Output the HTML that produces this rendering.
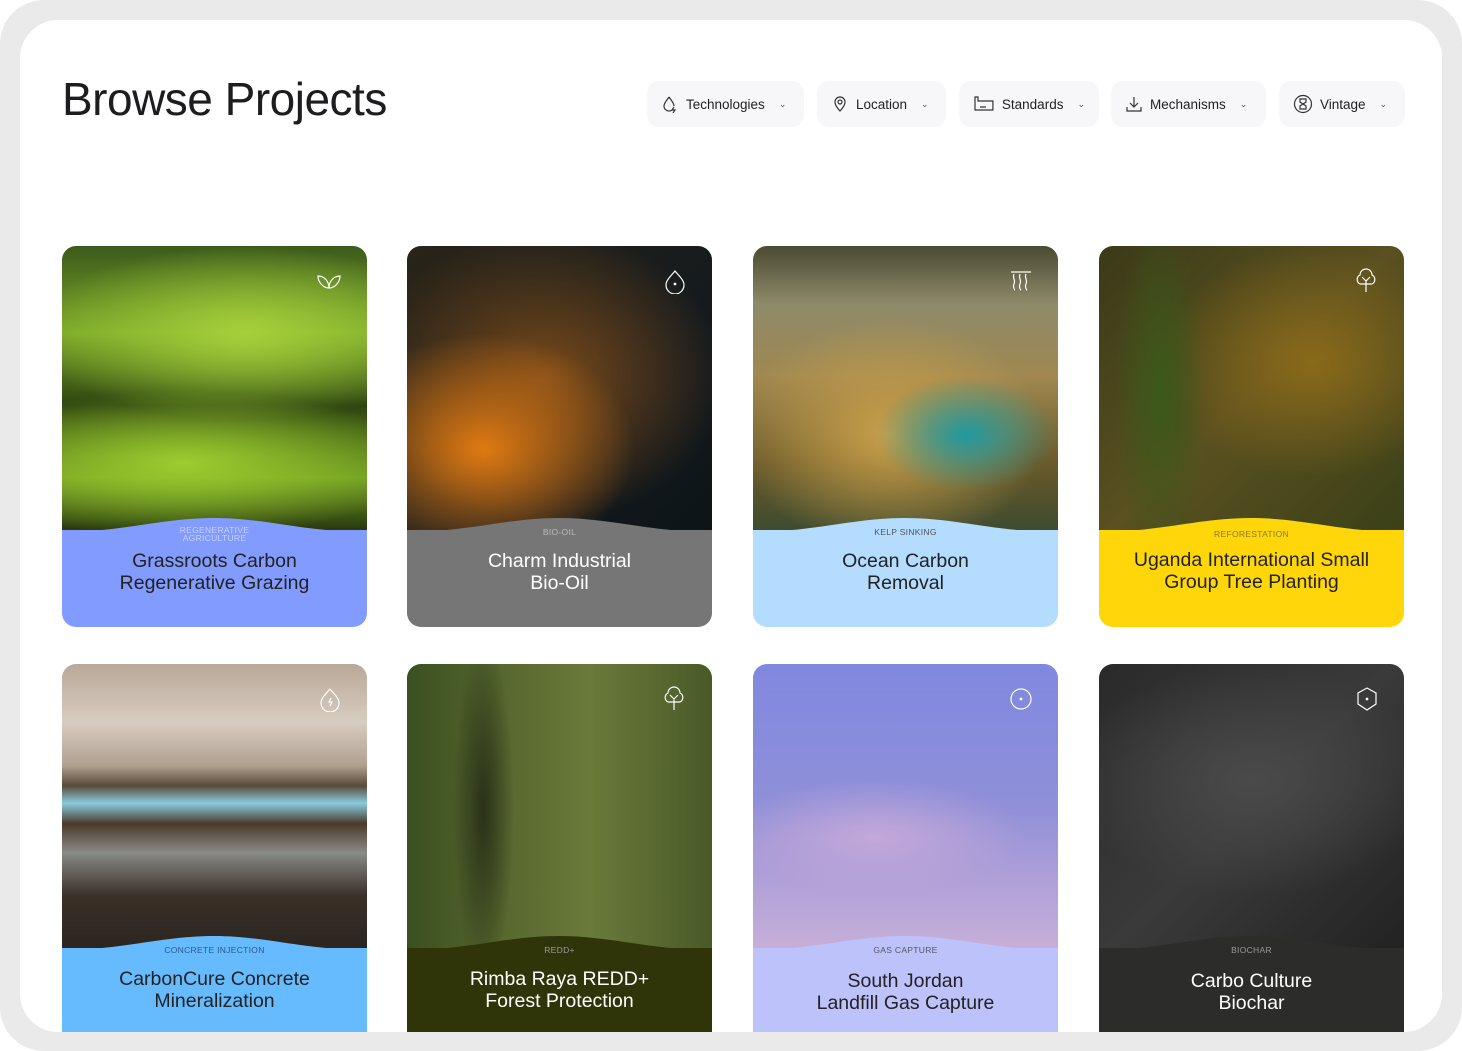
<!DOCTYPE html>
<html><head><meta charset="utf-8"><style>
*{box-sizing:border-box;margin:0;padding:0}
html,body{width:1462px;height:1051px;overflow:hidden;background:#fff;font-family:"Liberation Sans",sans-serif}
.frame{position:absolute;left:0;top:0;width:1462px;height:1051px;background:#ebeaeb;border-radius:44px}
.panel{position:absolute;left:20px;top:20px;width:1422px;height:1012px;background:#fff;border-radius:38px;overflow:hidden}
h1{position:absolute;left:42px;top:52px;font-weight:400;font-size:46px;color:#1d1d1f;letter-spacing:-0.5px}
.btn{position:absolute;top:61px;height:46px;background:#f7f6f8;border-radius:12px;display:flex;align-items:center;padding:0 14px;font-size:13.5px;color:#222}
.btn svg{margin-right:7px}
.btn .ch{margin-left:14px;font-size:9px;color:#555}
.card{position:absolute;width:305px;border-radius:14px;overflow:hidden}
.img{position:absolute;left:0;top:0;right:0;height:290px}
.bot{position:absolute;left:0;right:0;top:268px;bottom:0}
.bot svg{position:absolute;top:0;left:0}
.bot .fill{position:absolute;top:16px;left:0;right:0;bottom:0}
.tag{position:absolute;top:12px;left:0;right:0;text-align:center;font-size:8.5px;line-height:8px;letter-spacing:.3px;z-index:2}
.ttl{position:absolute;top:36px;left:0;right:0;text-align:center;font-size:19.5px;line-height:22px;color:#222;z-index:2}
.ic{position:absolute;top:22px;right:24px;z-index:3}
</style></head><body>
<div class="frame"></div>
<div class="panel">
<h1>Browse Projects</h1>
<div class="btn" style="left:627px;width:157px"><svg width="18" height="18" viewBox="0 0 18 18" fill="none" stroke="#333" stroke-width="1.2"><path d="M8 2C6 5 3 8 3 11a5 5 0 0 0 8 4M8 2c2 3 5 6 5 9"/><path d="M13 12l-2 3h3l-2 3"/></svg>Technologies<span class="ch">⌄</span></div>
<div class="btn" style="left:797px;width:129px"><svg width="18" height="18" viewBox="0 0 18 18" fill="none" stroke="#333" stroke-width="1.2"><path d="M9 16s5-5 5-9a5 5 0 0 0-10 0c0 4 5 9 5 9z"/><circle cx="9" cy="7" r="2"/></svg>Location<span class="ch">⌄</span></div>
<div class="btn" style="left:939px;width:140px"><svg width="22" height="18" viewBox="0 0 22 18" fill="none" stroke="#333" stroke-width="1.2"><path d="M2 2v13h18V6H5V2z"/><path d="M7 12h6"/></svg>Standards<span class="ch">⌄</span></div>
<div class="btn" style="left:1091px;width:155px"><svg width="18" height="18" viewBox="0 0 18 18" fill="none" stroke="#333" stroke-width="1.2"><path d="M9 2v10M5 8l4 4 4-4M2 12v4h14v-4"/></svg>Mechanisms<span class="ch">⌄</span></div>
<div class="btn" style="left:1259px;width:126px"><svg width="20" height="20" viewBox="0 0 20 20" fill="none" stroke="#333" stroke-width="1.2"><circle cx="10" cy="10" r="8.5"/><path d="M7 5h6v3l-3 2 3 2v3H7v-3l3-2-3-2z"/></svg>Vintage<span class="ch">⌄</span></div>

<div class="card" style="left:42px;top:226px;height:381px">
<div class="img" style="background:radial-gradient(ellipse 70% 30% at 60% 30%,#a6d03a,transparent),radial-gradient(ellipse 80% 25% at 40% 75%,#9ccc2e,transparent),linear-gradient(#3c5a1a,#7aa82a 30%,#2d4410 55%,#6e9a22 80%,#202e0c)"></div>
<svg class="ic" width="28" height="24" viewBox="0 0 28 24" fill="none" stroke="#fff" stroke-width="1.2"><path d="M14 20C8 20 3 14 3 8c6 0 11 5 11 12zM14 20c6 0 11-6 11-12-6 0-11 5-11 12z"/></svg>
<div class="bot"><svg width="305" height="20" viewBox="0 0 305 20" preserveAspectRatio="none"><path d="M0 18C60 18 100 4 152 4s90 14 153 14V20H0z" fill="#829bff"/></svg><div class="fill" style="background:#829bff"></div>
<div class="tag" style="color:#c7d2ff">REGENERATIVE<br>AGRICULTURE</div><div class="ttl">Grassroots Carbon<br>Regenerative Grazing</div></div></div>

<div class="card" style="left:387px;top:226px;height:381px">
<div class="img" style="background:radial-gradient(ellipse 50% 40% at 25% 70%,#e07a12,transparent),radial-gradient(ellipse 60% 50% at 45% 45%,#7a4a1a,transparent),linear-gradient(135deg,#2a2418,#141a1e 60%,#0d1418)"></div>
<svg class="ic" width="26" height="26" viewBox="0 0 26 26" fill="none" stroke="#fff" stroke-width="1.2"><path d="M13 3c-4 5-9 9-9 14a9 9 0 0 0 18 0c0-5-5-9-9-14z"/><circle cx="13" cy="16" r="0.8" fill="#fff"/></svg>
<div class="bot"><svg width="305" height="20" viewBox="0 0 305 20" preserveAspectRatio="none"><path d="M0 18C60 18 100 4 152 4s90 14 153 14V20H0z" fill="#767676"/></svg><div class="fill" style="background:#767676"></div>
<div class="tag" style="color:#bbb;top:14px">BIO-OIL</div><div class="ttl" style="color:#fff">Charm Industrial<br>Bio-Oil</div></div></div>

<div class="card" style="left:733px;top:226px;height:381px">
<div class="img" style="background:radial-gradient(ellipse 30% 20% at 70% 65%,#1f9aa0,transparent),radial-gradient(ellipse 50% 40% at 45% 65%,#c9a04a,transparent),linear-gradient(#4a4a30,#8e8a6a 20%,#a08850 45%,#6a5a2a 75%,#3a4a30)"></div>
<svg class="ic" width="26" height="26" viewBox="0 0 26 26" fill="none" stroke="#fff" stroke-width="1.2"><path d="M3 4h20M6 6c-2 4 2 6 0 10s2 6 0 6M12 6c-2 4 2 6 0 10s2 6 0 6M18 6c-2 4 2 6 0 10s2 6 0 6"/></svg>
<div class="bot"><svg width="305" height="20" viewBox="0 0 305 20" preserveAspectRatio="none"><path d="M0 18C60 18 100 4 152 4s90 14 153 14V20H0z" fill="#b3dcfe"/></svg><div class="fill" style="background:#b3dcfe"></div>
<div class="tag" style="color:#555;top:14px">KELP SINKING</div><div class="ttl">Ocean Carbon<br>Removal</div></div></div>

<div class="card" style="left:1079px;top:226px;height:381px">
<div class="img" style="background:radial-gradient(ellipse 15% 60% at 20% 50%,#3a5a1a,transparent),radial-gradient(ellipse 50% 40% at 70% 40%,#8a6a1a,transparent),linear-gradient(135deg,#3a3a18,#5a5020 50%,#3a4018)"></div>
<svg class="ic" width="28" height="26" viewBox="0 0 28 26" fill="none" stroke="#fff" stroke-width="1.2"><path d="M14 24V12M10 9l4 4 4-4M8 16a5 5 0 0 1 0-9 6 6 0 0 1 12 0 5 5 0 0 1 0 9z"/></svg>
<div class="bot"><svg width="305" height="20" viewBox="0 0 305 20" preserveAspectRatio="none"><path d="M0 18C60 18 100 4 152 4s90 14 153 14V20H0z" fill="#ffd60a"/></svg><div class="fill" style="background:#ffd60a"></div>
<div class="tag" style="color:#8a7a20;top:16px">REFORESTATION</div><div class="ttl" style="top:35px">Uganda International Small<br>Group Tree Planting</div></div></div>

<div class="card" style="left:42px;top:644px;height:400px;border-radius:14px 14px 0 0">
<div class="img" style="background:linear-gradient(#b8a898,#d8ccc0 20%,#b0a090 35%,#5a4a3a 42%,#8acbe0 48%,#4a3a2a 55%,#8a8a86 65%,#3a3028 80%,#2a2420)"></div>
<svg class="ic" width="26" height="26" viewBox="0 0 26 26" fill="none" stroke="#fff" stroke-width="1.2"><path d="M13 3c-4 5-9 9-9 14a9 9 0 0 0 18 0c0-5-5-9-9-14z"/><path d="M14 12l-2 4h3l-2 4"/></svg>
<div class="bot"><svg width="305" height="20" viewBox="0 0 305 20" preserveAspectRatio="none"><path d="M0 18C60 18 100 4 152 4s90 14 153 14V20H0z" fill="#66bbff"/></svg><div class="fill" style="background:#66bbff"></div>
<div class="tag" style="color:#2a5a8a;top:14px">CONCRETE INJECTION</div><div class="ttl">CarbonCure Concrete<br>Mineralization</div></div></div>

<div class="card" style="left:387px;top:644px;height:400px;border-radius:14px 14px 0 0">
<div class="img" style="background:radial-gradient(ellipse 10% 60% at 25% 50%,#2a3018,transparent),linear-gradient(90deg,#3a5020,#5a6a30 35%,#6a7a3a 60%,#4a5a28)"></div>
<svg class="ic" width="28" height="26" viewBox="0 0 28 26" fill="none" stroke="#fff" stroke-width="1.2"><path d="M14 24V12M10 9l4 4 4-4M8 16a5 5 0 0 1 0-9 6 6 0 0 1 12 0 5 5 0 0 1 0 9z"/></svg>
<div class="bot"><svg width="305" height="20" viewBox="0 0 305 20" preserveAspectRatio="none"><path d="M0 18C60 18 100 4 152 4s90 14 153 14V20H0z" fill="#2f3508"/></svg><div class="fill" style="background:#2f3508"></div>
<div class="tag" style="color:#999;top:14px">REDD+</div><div class="ttl" style="color:#fff">Rimba Raya REDD+<br>Forest Protection</div></div></div>

<div class="card" style="left:733px;top:644px;height:400px;border-radius:14px 14px 0 0">
<div class="img" style="background:radial-gradient(ellipse 50% 20% at 40% 60%,#c4a8d8,transparent),linear-gradient(#8088e0,#9090d8 50%,#b0a0d8 75%,#c8b0d8)"></div>
<svg class="ic" width="26" height="26" viewBox="0 0 26 26" fill="none" stroke="#fff" stroke-width="1.2"><circle cx="13" cy="13" r="10"/><circle cx="13" cy="13" r="0.8" fill="#fff"/></svg>
<div class="bot"><svg width="305" height="20" viewBox="0 0 305 20" preserveAspectRatio="none"><path d="M0 18C60 18 100 4 152 4s90 14 153 14V20H0z" fill="#bdc2fb"/></svg><div class="fill" style="background:#bdc2fb"></div>
<div class="tag" style="color:#556;top:14px">GAS CAPTURE</div><div class="ttl" style="top:38px">South Jordan<br>Landfill Gas Capture</div></div></div>

<div class="card" style="left:1079px;top:644px;height:400px;border-radius:14px 14px 0 0">
<div class="img" style="background:radial-gradient(ellipse 60% 40% at 50% 40%,#4a4a4a,transparent),linear-gradient(135deg,#2a2a2a,#3a3a3a 50%,#222)"></div>
<svg class="ic" width="26" height="26" viewBox="0 0 26 26" fill="none" stroke="#fff" stroke-width="1.2"><path d="M13 2l9 5v11l-9 6-9-6V7z"/><circle cx="13" cy="13" r="0.8" fill="#fff"/></svg>
<div class="bot"><svg width="305" height="20" viewBox="0 0 305 20" preserveAspectRatio="none"><path d="M0 18C60 18 100 4 152 4s90 14 153 14V20H0z" fill="#2c2c2a"/></svg><div class="fill" style="background:#2c2c2a"></div>
<div class="tag" style="color:#999;top:14px">BIOCHAR</div><div class="ttl" style="color:#fff;top:38px">Carbo Culture<br>Biochar</div></div></div>
</div>
</body></html>
